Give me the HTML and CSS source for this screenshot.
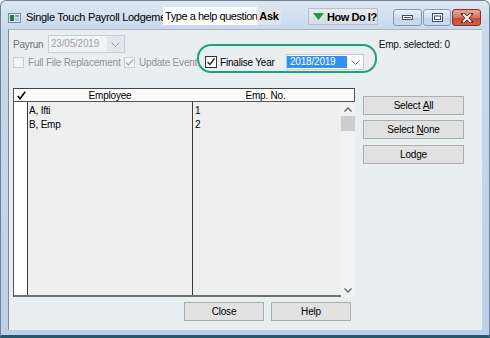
FILE: index.html
```html
<!DOCTYPE html>
<html>
<head>
<meta charset="utf-8">
<link rel="stylesheet" href="styles.css">
</head>
<body>
<div class="window">
  <div class="titlebar">
    <svg class="app-icon" width="13" height="10" viewBox="0 0 13 10">
      <rect x="0.5" y="0.5" width="12" height="9" fill="#dfe6ee" stroke="#7d8b99"/>
      <rect x="2" y="2" width="4" height="6" fill="#1f7a52"/>
      <rect x="7" y="2" width="4" height="2" fill="#6f9fd6"/>
      <rect x="7" y="5" width="4" height="3" fill="#b8c4d0"/>
    </svg>
    <div class="title">Single Touch Payroll Lodgement</div>
    <div class="help-box">Type a help question</div>
    <div class="ask">Ask</div>
    <div class="howdoi">
      <svg width="11" height="7" viewBox="0 0 11 7"><polygon points="0,0 11,0 5.5,7" fill="#1c9a3c"/></svg>
      <span>How Do I?</span>
    </div>
    <div class="wbtns">
      <div class="wbtn">
        <svg width="11" height="5" viewBox="0 0 11 5"><rect x="0.5" y="0.5" width="10" height="4" fill="#fff" stroke="#3c4e66"/><rect x="2" y="2" width="7" height="1" fill="#3c4e66"/></svg>
      </div>
      <div class="wbtn">
        <svg width="11" height="9" viewBox="0 0 11 9"><rect x="0.5" y="0.5" width="10" height="8" fill="#fff" stroke="#3c4e66"/><rect x="2.5" y="3" width="6" height="3.5" fill="none" stroke="#3c4e66"/></svg>
      </div>
      <div class="wbtn close">
        <svg width="12" height="10" viewBox="0 0 12 10"><path d="M2 1 L10 9 M10 1 L2 9" stroke="#5b1d12" stroke-width="3.6" stroke-linecap="square"/><path d="M2 1 L10 9 M10 1 L2 9" stroke="#fff" stroke-width="2"/></svg>
      </div>
    </div>
  </div>

  <div class="client">
    <div class="row1">
      <span class="lbl-payrun">Payrun</span>
      <div class="combo combo-disabled">
        <span class="combo-text">23/05/2019</span>
        <span class="combo-arrow"><svg width="9" height="5" viewBox="0 0 9 5"><polyline points="0.5,0.5 4.5,4.5 8.5,0.5" fill="none" stroke="#9a9a9a"/></svg></span>
      </div>
      <span class="emp-selected">Emp. selected: 0</span>
    </div>

    <div class="row2">
      <div class="chk-group g1">
        <span class="chk chk-disabled"></span>
        <span class="chk-text disabled-text">Full File Replacement</span>
      </div>
      <div class="chk-group g2">
        <span class="chk chk-disabled">
          <svg width="11" height="11" viewBox="0 0 11 11"><polyline points="2,5.5 4.5,8 9,2.5" fill="none" stroke="#a8a8a8" stroke-width="1.2"/></svg>
        </span>
        <span class="chk-text disabled-text">Update Event</span>
      </div>
      <div class="chk-group g3">
        <span class="chk chk-on">
          <svg width="10" height="10" viewBox="0 0 10 10"><polyline points="1.5,5 4,7.5 8.5,1.5" fill="none" stroke="#222" stroke-width="1.3"/></svg>
        </span>
        <span class="chk-text fin-text">Finalise Year</span>
      </div>
      <div class="combo combo-year">
        <span class="combo-sel">2018/2019</span>
        <span class="combo-arrow arrow-year"><svg width="9" height="5" viewBox="0 0 9 5"><polyline points="0.5,0.5 4.5,4.5 8.5,0.5" fill="none" stroke="#707070"/></svg></span>
      </div>
    </div>

    <div class="main">
      <div class="grid">
        <div class="grid-head">
          <div class="hc-check">
            <svg width="9" height="9" viewBox="0 0 9 9"><path d="M0.8 5 L3 7.8 L8.2 0.8" fill="none" stroke="#000" stroke-width="1.5"/></svg>
          </div>
          <div class="hc-emp">Employee</div>
          <div class="hc-no">Emp. No.</div>
          <div class="hc-sp"></div>
        </div>
        <div class="grid-body">
          <div class="cells">
            <div class="col-check"></div>
            <div class="col-emp">
              <div class="cell">A, Ifti</div>
              <div class="cell">B, Emp</div>
            </div>
            <div class="col-no">
              <div class="cell">1</div>
              <div class="cell">2</div>
            </div>
          </div>
          <div class="scrollbar">
            <div class="sb-btn"><svg width="8" height="5" viewBox="0 0 8 5"><polyline points="0.5,4.5 4,1 7.5,4.5" fill="none" stroke="#606060" stroke-width="1.3"/></svg></div>
            <div class="sb-thumb"></div>
            <div class="sb-track"></div>
            <div class="sb-btn"><svg width="8" height="5" viewBox="0 0 8 5"><polyline points="0.5,0.5 4,4 7.5,0.5" fill="none" stroke="#606060" stroke-width="1.3"/></svg></div>
          </div>
        </div>
      </div>
      <div class="side-buttons">
        <div class="btn">Select <u>A</u>ll</div>
        <div class="btn">Select <u>N</u>one</div>
        <div class="btn btn-lodge">Lodge</div>
      </div>
    </div>

    <div class="bottom-buttons">
      <div class="btn btn-wide">Close</div>
      <div class="btn btn-wide">Help</div>
    </div>

    <div class="highlight"></div>
  </div>
</div>
</body>
</html>
```

FILE: styles.css
```css
html, body {
  margin: 0;
  padding: 0;
}
body {
  width: 490px;
  height: 338px;
  overflow: hidden;
  background: #ffffff;
  font-family: "Liberation Sans", Arial, sans-serif;
  font-size: 10px;
  letter-spacing: -0.2px;
  color: #000;
}
.window {
  box-sizing: border-box;
  width: 490px;
  height: 338px;
  border: 1px solid #6f8196;
  border-bottom: 3px solid #25566b;
  border-radius: 6px 6px 0 0;
  background: linear-gradient(#dde7f3, #c8d9ec 28px, #bcd1e9 100%);
  padding: 0 7px 5px 7px;
  display: flex;
  flex-direction: column;
}

/* Title bar */
.titlebar {
  height: 28px;
  flex: none;
  display: flex;
  align-items: flex-start;
}
.app-icon {
  margin-top: 12px;
  flex: none;
}
.title {
  margin-left: 5px;
  width: 137px;
  margin-top: 9px;
  line-height: 14px;
  font-size: 11px;
  letter-spacing: -0.3px;
  white-space: nowrap;
  overflow: hidden;
  flex: none;
}
.help-box {
  width: 94px;
  height: 18px;
  margin-top: 6px;
  background: #ffffff;
  line-height: 18px;
  font-size: 11px;
  letter-spacing: -0.45px;
  padding-left: 2px;
  box-sizing: border-box;
  white-space: nowrap;
  overflow: hidden;
  flex: none;
}
.ask {
  width: 24px;
  height: 18px;
  margin-top: 6px;
  background: #dfe4ea;
  font-weight: bold;
  font-size: 11px;
  letter-spacing: -0.3px;
  line-height: 18px;
  text-align: center;
  flex: none;
}
.howdoi {
  margin-left: 27px;
  margin-top: 7px;
  width: 70px;
  height: 17px;
  box-sizing: border-box;
  border: 1px solid #b7c0cb;
  background: linear-gradient(#e6ebf0, #d6dde5);
  display: flex;
  align-items: center;
  padding-left: 4px;
  gap: 3px;
  font-weight: bold;
  font-size: 11px;
  letter-spacing: -0.45px;
  flex: none;
}
.wbtns {
  margin-left: 15px;
  margin-top: 8px;
  display: flex;
  gap: 1px;
  flex: none;
}
.wbtn {
  width: 29px;
  height: 17px;
  box-sizing: border-box;
  border: 1px solid #8a9bb1;
  border-radius: 3px;
  background: linear-gradient(#eaf1f9, #d3e0ef 50%, #c3d4e9 51%, #cfdcee);
  display: flex;
  align-items: center;
  justify-content: center;
}
.wbtn:nth-child(2) {
  width: 28px;
}
.wbtn.close {
  border-color: #7e3327;
  background: linear-gradient(#eba899, #d47462 50%, #c44a35 51%, #d0614b);
}

/* Client area */
.client {
  position: relative;
  flex: 1;
  box-sizing: border-box;
  border-left: 1px solid #808b97;
  border-top: 1px solid #a7b5c4;
  background: #e9eef1;
  padding: 5px 18px 0 4px;
  display: flex;
  flex-direction: column;
}
.row1 {
  height: 18px;
  display: flex;
  align-items: center;
}
.lbl-payrun {
  width: 35px;
  color: #6f6f6f;
}
.combo {
  box-sizing: border-box;
  display: flex;
  align-items: stretch;
  border: 1px solid #c6ccd3;
}
.combo-disabled {
  width: 77px;
  height: 18px;
  background: #f1f3f5;
}
.combo-text {
  flex: 1;
  padding-left: 2px;
  line-height: 16px;
  color: #a2a2a2;
}
.combo-arrow {
  width: 17px;
  display: flex;
  align-items: center;
  justify-content: center;
  background: #e3e6ea;
}
.emp-selected {
  margin-left: auto;
  margin-right: 14px;
  color: #111;
}
.row2 {
  margin-top: 1px;
  height: 16px;
  display: flex;
  align-items: center;
}
.chk-group {
  display: flex;
  align-items: center;
  flex: none;
}
.g1 { width: 111px; }
.g2 { width: 81px; }
.g3 { width: 81px; }
.chk {
  box-sizing: border-box;
  width: 11px;
  height: 11px;
  flex: none;
  display: flex;
  align-items: center;
  justify-content: center;
}
.chk-disabled {
  border: 1px solid #c9cdd1;
  background: #f4f6f8;
}
.chk-disabled svg {
  margin: -1px;
}
.chk-on {
  width: 12px;
  height: 12px;
  border: 1px solid #333;
  background: #ffffff;
}
.chk-text {
  margin-left: 4px;
  white-space: nowrap;
}
.fin-text {
  margin-left: 3px;
}
.disabled-text {
  color: #939393;
}
.combo-year {
  width: 78px;
  height: 16px;
  background: #ffffff;
  border-color: #c4c9cf;
  padding: 1px 0 1px 0;
}
.combo-sel {
  width: 60px;
  background: #3390ee;
  color: #ffffff;
  line-height: 12px;
  padding-left: 3px;
  box-sizing: border-box;
}
.arrow-year {
  flex: 1;
  background: #ffffff;
}

/* Main grid */
.main {
  margin-top: 18px;
  display: flex;
  align-items: flex-start;
}
.grid {
  width: 342px;
  height: 209px;
  box-sizing: border-box;
  border-left: 1px solid #555;
  border-top: 1px solid #444;
  display: flex;
  flex-direction: column;
  flex: none;
}
.grid-head {
  height: 13px;
  box-sizing: border-box;
  border-bottom: 1px solid #555;
  border-right: 1px solid #555;
  background: #fbfbfb;
  display: flex;
  align-items: center;
}
.hc-check {
  width: 14px;
  height: 12px;
  display: flex;
  align-items: center;
  padding-left: 3px;
  box-sizing: border-box;
}
.hc-emp {
  width: 164px;
  text-align: center;
}
.hc-no {
  width: 147px;
  text-align: center;
}
.hc-sp {
  flex: 1;
}
.grid-body {
  flex: 1;
  display: flex;
}
.cells {
  flex: 1;
  display: flex;
  background: #efefef;
  border-bottom: 2px solid #707070;
}
.col-check {
  width: 13px;
  background: #ffffff;
  border-right: 1px solid #3a3a3a;
}
.col-emp {
  width: 164px;
  border-right: 1px solid #3a3a3a;
  padding-top: 2px;
}
.col-no {
  flex: 1;
  padding-top: 2px;
}
.cell {
  height: 14px;
  line-height: 14px;
  padding-left: 1px;
  white-space: nowrap;
}
.col-no .cell {
  padding-left: 2px;
}
.scrollbar {
  width: 14px;
  background: #f1f1f1;
  display: flex;
  flex-direction: column;
}
.sb-btn {
  height: 14px;
  display: flex;
  align-items: center;
  justify-content: center;
}
.sb-thumb {
  height: 15px;
  background: #cdcdcd;
}
.sb-track {
  flex: 1;
}

/* Buttons */
.side-buttons {
  margin-left: 8px;
  padding-top: 8px;
  width: 101px;
  display: flex;
  flex-direction: column;
  gap: 5px;
}
.btn {
  box-sizing: border-box;
  height: 19px;
  border: 1px solid #adadad;
  background: #e1e1e1;
  display: flex;
  align-items: center;
  justify-content: center;
  white-space: pre;
}
.btn-lodge {
  margin-top: 1px;
}
.bottom-buttons {
  margin-top: 5px;
  margin-left: 171px;
  display: flex;
  gap: 7px;
}
.btn-wide {
  width: 80px;
}

/* Annotation highlight */
.highlight {
  position: absolute;
  left: 188px;
  top: 14px;
  width: 180px;
  height: 29px;
  box-sizing: border-box;
  border: 2.5px solid #1fa07e;
  border-radius: 14px;
  pointer-events: none;
}
```
